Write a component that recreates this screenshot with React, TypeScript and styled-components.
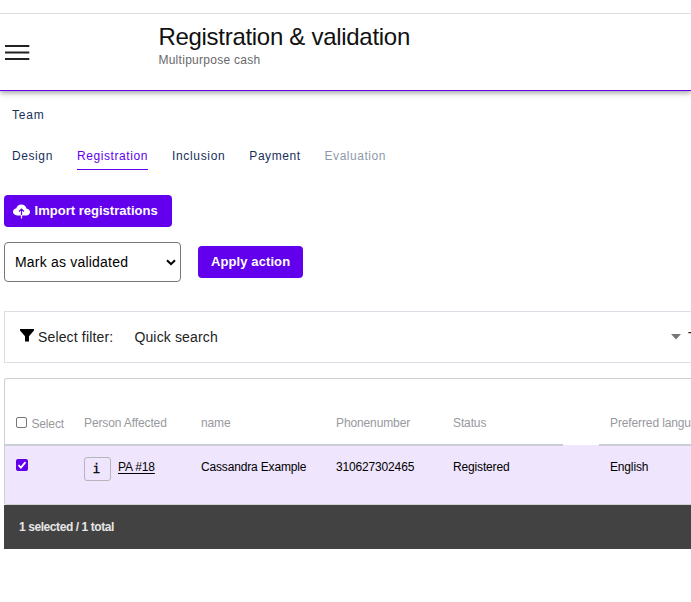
import React, { useState } from 'react';
import styled, { createGlobalStyle } from 'styled-components';

const PURPLE = '#6200ee';
const NAVY = '#17305a';

const GlobalStyle = createGlobalStyle`
  *, *::before, *::after { box-sizing: border-box; }
  html, body { margin: 0; background: #fff; overflow: hidden; }
  body, button, select, input { font-family: "Liberation Sans", Arial, sans-serif; }
  #root { height: 602px; }
`;

const Page = styled.div`
  width: 691px;
  height: 602px;
  padding-top: 13px;
  overflow: hidden;
  color: #000;
`;

const Header = styled.header`
  display: flex;
  height: 78px;
  border-top: 1px solid #dedede;
  border-bottom: 1px solid ${PURPLE};
  box-shadow: 0 2px 4px rgba(0, 0, 0, 0.24), 0 3px 7px rgba(0, 0, 0, 0.12);
  clip-path: inset(0 0 -14px 0);
`;

const MenuButton = styled.button`
  display: flex;
  align-items: flex-start;
  width: 158px;
  padding: 31px 0 0 5px;
  border: 0;
  background: none;
`;

const Heading = styled.div`
  padding: 8px 0 0 0.4px;
`;

const Title = styled.h1`
  margin: 0;
  font-size: 24px;
  font-weight: 400;
  line-height: 30px;
  letter-spacing: -0.29px;
  color: #111;
`;

const Subtitle = styled.p`
  margin: 0;
  font-size: 12px;
  line-height: 16px;
  letter-spacing: 0.28px;
  color: #696969;
`;

const TeamRow = styled.div`
  height: 44px;
  padding: 16px 12px 0;
  font-size: 12px;
  line-height: 16px;
  letter-spacing: 0.84px;
  color: ${NAVY};
`;

const Tabs = styled.nav`
  display: flex;
  gap: 24px;
  height: 60px;
  padding: 13px 12px 0;
`;

const Tab = styled.a<{ $active?: boolean; $disabled?: boolean; $spacing: number }>`
  height: 22px;
  font-size: 12px;
  line-height: 16px;
  letter-spacing: ${(p) => p.$spacing}px;
  white-space: nowrap;
  color: ${(p) => (p.$active ? PURPLE : NAVY)};
  opacity: ${(p) => (p.$disabled ? 0.5 : 1)};
  border-bottom: 1px solid ${(p) => (p.$active ? PURPLE : 'transparent')};
`;

const Actions = styled.section`
  padding-left: 4px;
`;

const ActionRow = styled.div`
  display: flex;
  align-items: center;
  gap: 17px;
  height: 40px;
  margin-top: 15px;
`;

const Button = styled.button<{ $width: number }>`
  display: flex;
  align-items: center;
  gap: 4.5px;
  width: ${(p) => p.$width}px;
  height: 32px;
  padding: 0 0 1px ${(p) => (p.$width > 120 ? 9 : 13)}px;
  border: 0;
  border-radius: 4px;
  background: ${PURPLE};
  color: #fff;
  font-size: 13px;
  font-weight: 700;
  letter-spacing: ${(p) => (p.$width > 120 ? 0.02 : 0.1)}px;
  white-space: nowrap;
  svg { margin-top: 1px; }
`;

const SelectBox = styled.div`
  display: flex;
  align-items: center;
  justify-content: space-between;
  width: 177px;
  height: 40px;
  padding: 0 4px 0 10px;
  border: 1px solid #767676;
  border-radius: 4px;
  font-size: 14px;
  letter-spacing: 0.2px;
`;

const FilterBar = styled.section`
  display: flex;
  align-items: center;
  height: 52px;
  margin: 29px 0 0 4px;
  padding-left: 15px;
  border: 1px solid #dadfe6;
  border-right: 0;
  font-size: 14px;
  color: #222;
  white-space: nowrap;
  overflow: hidden;
`;

const FunnelIcon = styled.svg`
  margin: -3px 4px 0 0;
  flex: none;
`;

const FilterLabel = styled.span`
  flex: 0 0 96.4px;
  letter-spacing: 0.15px;
`;

const FilterChoice = styled.span`
  flex: 0 0 536.6px;
  letter-spacing: 0.15px;
`;

const Caret = styled.svg`
  flex: none;
`;

const FilterText = styled.span`
  flex: none;
  margin-left: 7px;
`;

const Table = styled.section`
  height: 171px;
  margin: 15px 0 0 4px;
`;

const TableFrame = styled.div`
  height: 127px;
  border: 1px solid #cdd1d6;
  border-right: 0;
  border-radius: 3px 0 0 3px;
  overflow: hidden;
`;

const Row = styled.div`
  display: grid;
  grid-template-columns: 68px 117px 135px 117px 121px 36px 160px;
`;

const HeadRow = styled(Row)`
  position: relative;
  height: 67px;
  margin-bottom: -1px;
`;

const BodyRow = styled(Row)`
  height: 60px;
  background: #efe5fd;
`;

const HeadCell = styled.div<{ $bare?: boolean }>`
  display: flex;
  padding: 36px 0 0 11px;
  border-bottom: ${(p) => (p.$bare ? '0' : '2px solid #cbced4')};
  color: #97999e;
  font-size: 12px;
  line-height: 16px;
  letter-spacing: -0.12px;
  white-space: nowrap;
`;

const Cell = styled.div`
  display: flex;
  padding: 14px 0 0 11px;
  font-size: 12px;
  line-height: 16px;
  letter-spacing: -0.16px;
  white-space: nowrap;
`;

const SelectLabel = styled.span`
  padding: 1px 0 0 4.4px;
`;

const Checkbox = styled.span<{ $checked?: boolean }>`
  display: block;
  flex: none;
  width: ${(p) => (p.$checked ? 12 : 11)}px;
  height: ${(p) => (p.$checked ? 12 : 11)}px;
  margin-top: ${(p) => (p.$checked ? 0 : 2)}px;
  border: ${(p) => (p.$checked ? '0' : '1px solid #767676')};
  border-radius: 2px;
  background: ${(p) => (p.$checked ? PURPLE : '#fff')};
  svg { display: block; }
`;

const InfoButton = styled.button`
  width: 27px;
  height: 24px;
  margin: -2px 7px 0 0;
  padding: 0 2px 1px 0;
  border: 1px solid #b8b4bd;
  border-radius: 3px;
  background: transparent;
  font-family: "DejaVu Sans Mono", monospace;
  font-size: 13px;
  line-height: 20px;
  -webkit-text-stroke: 0.3px #000;
`;

const PersonLink = styled.a`
  color: #000;
  text-decoration: underline;
  text-underline-offset: 2px;
`;

const Footer = styled.footer`
  height: 44px;
  padding-left: 15px;
  background: #424242;
  color: #e6e6e6;
  font-size: 12px;
  font-weight: 700;
  line-height: 45px;
  letter-spacing: -0.42px;
`;

const MenuIcon = () => (
  <svg width="25" height="16" viewBox="0 0 25 16">
    <path d="M0 1h24.3M0 7.5h24.3M0 14h24.3" stroke="#222" strokeWidth="2" />
  </svg>
);

const CloudUploadIcon = () => (
  <svg width="17" height="15" viewBox="0 0 17 15">
    <path
      d="M4.2 11.4C1.8 11.4 0 9.9 0 7.8 0 5.9 1.4 4.5 3.3 4.2 3.9 1.9 5.9.5 8.3.5c2.8 0 4.8 1.7 5.3 4.3C15.6 4.9 17 6.2 17 8c0 2-1.5 3.4-3.6 3.4z"
      fill="#fff"
    />
    <path d="M8.5 11V5.2M6 7.5l2.5-2.4L11 7.5" fill="none" stroke={PURPLE} strokeWidth="1.2" />
    <path d="M8.5 11v3.5" stroke="#fff" strokeWidth="1.2" />
  </svg>
);

const tabs = [
  { label: 'Design', spacing: 0.59 },
  { label: 'Registration', spacing: 0.59, active: true },
  { label: 'Inclusion', spacing: 0.66 },
  { label: 'Payment', spacing: 0.55 },
  { label: 'Evaluation', spacing: 0.54, disabled: true },
];

export default function App() {
  const [checked, setChecked] = useState(true);

  return (
    <>
      <GlobalStyle />
      <Page>
        <Header>
          <MenuButton aria-label="Menu"><MenuIcon /></MenuButton>
          <Heading>
            <Title>Registration &amp; validation</Title>
            <Subtitle>Multipurpose cash</Subtitle>
          </Heading>
        </Header>
        <TeamRow>Team</TeamRow>
        <Tabs>
          {tabs.map((t) => (
            <Tab key={t.label} $active={t.active} $disabled={t.disabled} $spacing={t.spacing}>
              {t.label}
            </Tab>
          ))}
        </Tabs>
        <Actions>
          <Button $width={168}>
            <CloudUploadIcon />
            <span>Import registrations</span>
          </Button>
          <ActionRow>
            <SelectBox>
              <span>Mark as validated</span>
              <svg width="10" height="7" viewBox="0 0 10 7">
                <path d="M1 1.2l4 4 4-4" fill="none" stroke="#000" strokeWidth="2" />
              </svg>
            </SelectBox>
            <Button $width={105}>Apply action</Button>
          </ActionRow>
        </Actions>
        <FilterBar>
          <FunnelIcon width="14" height="13" viewBox="0 0 14 13">
            <path d="M0 0h14v1.5L9 7.3V12.5H5V7.3L0 1.5z" />
          </FunnelIcon>
          <FilterLabel>Select filter:</FilterLabel>
          <FilterChoice>Quick search</FilterChoice>
          <Caret width="10" height="6" viewBox="0 0 10 6">
            <path d="M0 0h10L5 5.5z" fill="#777" />
          </Caret>
          <FilterText>T</FilterText>
        </FilterBar>
        <Table>
          <TableFrame>
            <HeadRow>
              <HeadCell>
                <Checkbox />
                <SelectLabel>Select</SelectLabel>
              </HeadCell>
              <HeadCell>Person Affected</HeadCell>
              <HeadCell>name</HeadCell>
              <HeadCell>Phonenumber</HeadCell>
              <HeadCell>Status</HeadCell>
              <HeadCell $bare />
              <HeadCell>Preferred language</HeadCell>
            </HeadRow>
            <BodyRow>
              <Cell>
                <Checkbox $checked={checked} onClick={() => setChecked(!checked)}>
                  <svg width="12" height="12" viewBox="0 0 12 12">
                    <path d="M2.5 6.2l2.4 2.4 4.6-5.4" fill="none" stroke="#fff" strokeWidth="1.8" />
                  </svg>
                </Checkbox>
              </Cell>
              <Cell>
                <InfoButton>i</InfoButton>
                <PersonLink>PA #18</PersonLink>
              </Cell>
              <Cell>Cassandra Example</Cell>
              <Cell>310627302465</Cell>
              <Cell>Registered</Cell>
              <Cell />
              <Cell>English</Cell>
            </BodyRow>
          </TableFrame>
          <Footer>1 selected / 1 total</Footer>
        </Table>
      </Page>
    </>
  );
}
